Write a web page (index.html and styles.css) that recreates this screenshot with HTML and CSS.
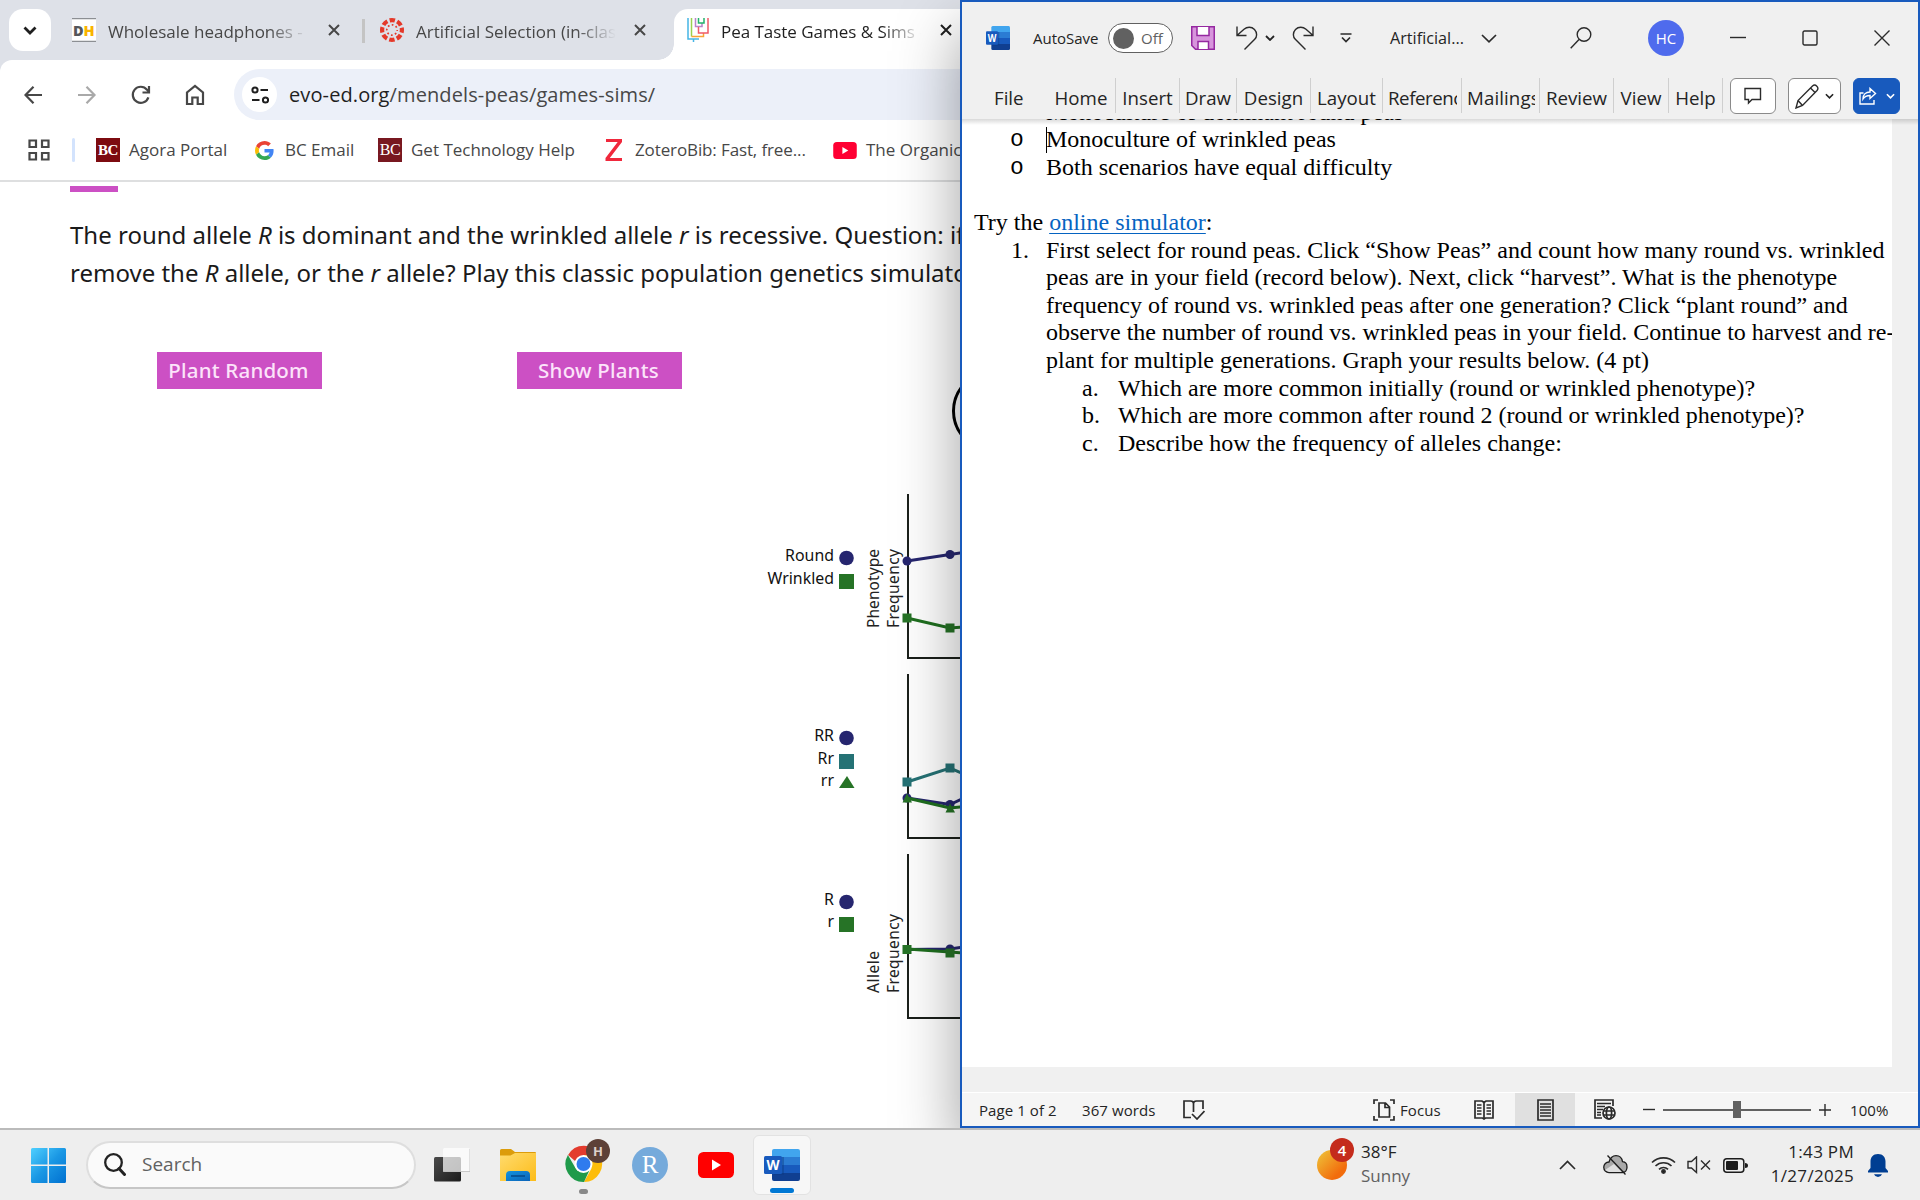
FILE: index.html
```html
<!DOCTYPE html>
<html lang="en">
<head>
<meta charset="utf-8">
<title>Desktop</title>
<link rel="stylesheet" href="styles.css">
</head>
<body>
<svg class="defs" width="0" height="0">
  <defs>
    <linearGradient id="win" x1="0" y1="0" x2="1" y2="1"><stop offset="0" stop-color="#4fd0ff"/><stop offset=".5" stop-color="#1a97e4"/><stop offset="1" stop-color="#0070d0"/></linearGradient>
    <linearGradient id="folder" x1="0" y1="0" x2="1" y2="1"><stop offset="0" stop-color="#ffdb6e"/><stop offset="1" stop-color="#fcbc19"/></linearGradient>
    <linearGradient id="sun" x1="0" y1="0" x2="1" y2="1"><stop offset=".1" stop-color="#efbb35"/><stop offset=".75" stop-color="#f26c0c"/></linearGradient>
    <linearGradient id="tv" x1="0" y1="0" x2="1" y2="1"><stop offset="0" stop-color="#4a4a4a"/><stop offset="1" stop-color="#1c1c1c"/></linearGradient>
    <linearGradient id="tray" x1="0" y1="0" x2="1" y2="1"><stop offset="0" stop-color="#1493df"/><stop offset="1" stop-color="#0a63b8"/></linearGradient>
    <symbol id="word" viewBox="0 0 36 32">
      <path d="M10 0h24a2 2 0 0 1 2 2v6H8V2a2 2 0 0 1 2-2z" fill="#41a5ee"/><path d="M8 8h28v8H8z" fill="#2b7cd3"/><path d="M8 16h28v8H8z" fill="#185abd"/><path d="M8 24h28v6a2 2 0 0 1-2 2H10a2 2 0 0 1-2-2z" fill="#103f91"/>
      <rect x="10" y="8" width="10" height="18" fill="#0d3a80" opacity=".4"/>
      <rect x="0" y="7" width="18" height="18" rx="1.500" fill="#185abd"/>
      <text x="9" y="21" text-anchor="middle" class="word-w">W</text>
    </symbol>
    <symbol id="close" viewBox="0 0 12 12"><path d="M1 1l10 10M11 1L1 11" fill="none" stroke="currentColor" stroke-width="2"/></symbol>
    <symbol id="caret" viewBox="0 0 10 6"><path d="M1 1l4 4 4-4" fill="none" stroke="currentColor" stroke-width="1.800"/></symbol>
    <symbol id="youtube" viewBox="0 0 36 26"><rect width="36" height="26" rx="5.500" fill="currentColor"/><path d="M14 7.500l9 5.500-9 5.500z" fill="#fff"/></symbol>
  </defs>
</svg>

<main class="desktop">
  <section class="browser">
    <header class="tab-strip">
      <button class="tab-search"><svg width="14" height="9" viewBox="0 0 14 9"><path d="M1.500 1.500L7 7l5.500-5.500" fill="none" stroke="#1f1f1f" stroke-width="2.800"/></svg></button>
      <div class="tab first">
        <svg width="24" height="24" viewBox="0 0 24 24"><rect width="24" height="24" fill="#fff"/><path d="M0 .500h24M0 23.500h24" stroke="#8c8f93" stroke-width="1.500"/><text x="1" y="17.500" class="dh" fill="#55565a">D</text><text x="11.500" y="17.500" class="dh" fill="#f9b400">H</text></svg>
        <span class="tab-title">Wholesale headphones -</span>
        <svg class="x" width="12" height="12"><use href="#close"/></svg>
      </div>
      <i class="tab-sep"></i>
      <div class="tab">
        <svg width="24" height="24" viewBox="0 0 24 24" fill="none" stroke="#e4392a"><circle cx="12" cy="12" r="9.900" stroke-width="4.200" stroke-dasharray="5.400 2.375" stroke-dashoffset="2.700"/><circle cx="12" cy="12" r="5.200" stroke-width="1.700" stroke-dasharray="1.700 2.384" stroke-dashoffset=".85"/></svg>
        <span class="tab-title">Artificial Selection (in-class</span>
        <svg class="x" width="12" height="12"><use href="#close"/></svg>
      </div>
      <div class="tab active">
        <svg width="24" height="24" viewBox="0 0 24 24" fill="none" stroke-width="1.500"><path d="M2 0v21h11M7.500 21v3" stroke="#45b5e5"/><path d="M5.500 0v18.500" stroke="#9ad14f"/><path d="M5.500 18.500h12V15" stroke="#f7a436"/><path d="M9.500 0v8.500h6.500V5" stroke="#b983c9"/><path d="M12.500 0v5h5.500V0" stroke="#23b26b"/><path d="M12.500 9v6H22V0" stroke="#ef5a67"/></svg>
        <span class="tab-title">Pea Taste Games &amp; Sims -</span>
        <svg class="x" width="12" height="12"><use href="#close"/></svg>
      </div>
    </header>
    <div class="chrome-body">
      <nav class="toolbar">
        <svg width="20" height="20" viewBox="0 0 20 20" class="line"><path d="M18 10H2M9.500 1.800L1.500 10l8 8.200"/></svg>
        <svg width="20" height="20" viewBox="0 0 20 20" class="line dim"><path d="M1 10h16M9.500 1.800l8 8.200-8 8.200"/></svg>
        <svg width="20" height="20" viewBox="0 0 20 20" class="line"><path d="M17.400 12.300A8 8 0 1 1 16 4.700l1.500 2"/><path d="M18 1v6.500h-6.500"/></svg>
        <svg width="20" height="22" viewBox="0 0 20 22" class="line"><path d="M2 20V8.500L10 2l8 6.500V20h-5.300v-6.500H7.300V20z"/></svg>
        <div class="omnibox">
          <span class="site-info"><svg width="18" height="18" viewBox="0 0 18 18" fill="none" stroke="#1f1f1f" stroke-width="2"><circle cx="4" cy="4" r="2.600"/><path d="M9.500 4H17M1 14h7.500"/><circle cx="14.500" cy="14" r="2.600"/></svg></span>
          <span class="url"><b>evo-ed.org</b>/mendels-peas/games-sims/</span>
        </div>
      </nav>
      <nav class="bookmarks">
        <svg width="22" height="22" viewBox="0 0 22 22" fill="none" stroke="#474747" stroke-width="2.200"><path d="M1.500 1.500h6.500v6.500H1.500zM14 1.500h6.500v6.500H14zM1.500 14h6.500v6.500H1.500zM14 14h6.500v6.500H14z"/></svg>
        <i class="bm-sep"></i>
        <b class="bc">BC</b><span>Agora Portal</span>
        <svg width="19" height="19" viewBox="0 0 48 48"><path fill="#EA4335" d="M24 9.500c3.540 0 6.710 1.220 9.210 3.600l6.850-6.850C35.900 2.380 30.470 0 24 0 14.620 0 6.510 5.380 2.560 13.220l7.980 6.190C12.430 13.720 17.740 9.500 24 9.500z"/><path fill="#4285F4" d="M46.980 24.550c0-1.570-.15-3.090-.38-4.550H24v9.020h12.940c-.58 2.960-2.260 5.480-4.780 7.180l7.730 6c4.510-4.180 7.090-10.360 7.090-17.650z"/><path fill="#FBBC05" d="M10.530 28.590A14.500 14.500 0 0 1 9.770 24c0-1.600.27-3.140.76-4.590l-7.980-6.190A23.900 23.900 0 0 0 0 24c0 3.880.92 7.540 2.560 10.780z"/><path fill="#34A853" d="M24 48c6.480 0 11.930-2.130 15.890-5.810l-7.730-6c-2.150 1.450-4.920 2.300-8.160 2.300-6.260 0-11.570-4.220-13.470-9.910l-7.980 6.190C6.510 42.620 14.620 48 24 48z"/></svg>
        <span>BC Email</span>
        <b class="bc alt">BC</b><span>Get Technology Help</span>
        <svg width="18" height="22" viewBox="0 0 18 22"><path d="M1 0h16v3L4.800 19H17v3H.500v-3L12.700 3H1z" fill="#f0283c"/></svg>
        <span class="tight">ZoteroBib: Fast, free...</span>
        <svg width="24" height="17" class="yt-pink"><use href="#youtube"/></svg>
        <span>The Organic</span>
      </nav>
      <article class="page">
        <i class="accent"></i>
        <p>The round allele <em>R</em> is dominant and the wrinkled allele <em>r</em> is recessive. Question: if<br>remove the <em>R</em> allele, or the <em>r</em> allele? Play this classic population genetics simulator</p>
        <div class="game">
          <div class="game-buttons"><button>Plant Random</button><button>Show Plants</button></div>
          <svg class="plots" width="220" height="700" viewBox="740 340 220 700">
            <circle cx="992.500" cy="411" r="39" fill="none" stroke="#000" stroke-width="3"/>
            <g class="axes"><path d="M908 494v164h60M908 674v164h60M908 854v164h60"/></g>
            <g class="legend">
              <text x="834" y="561">Round</text><text x="834" y="584">Wrinkled</text>
              <text x="834" y="741">RR</text><text x="834" y="764">Rr</text><text x="834" y="786">rr</text>
              <text x="834" y="905">R</text><text x="834" y="927">r</text>
            </g>
            <g class="titles">
              <text transform="translate(879 628) rotate(-90)" textLength="79">Phenotype</text>
              <text transform="translate(898.500 628) rotate(-90)" textLength="79">Frequency</text>
              <text transform="translate(879 993) rotate(-90)" textLength="42">Allele</text>
              <text transform="translate(898.500 993) rotate(-90)" textLength="79">Frequency</text>
            </g>
            <g class="navy"><circle cx="846.500" cy="558" r="7.300"/><circle cx="846.500" cy="738" r="7.300"/><circle cx="846.500" cy="902" r="7.300"/>
              <path d="M907 561l43-6.500 14-2M907 798l43 6.500 14-6.500M907 949.500l43-.5 14-2"/>
              <circle cx="907" cy="561" r="4.500"/><circle cx="950" cy="554.500" r="4.500"/><circle cx="907" cy="798" r="4.500"/><circle cx="950" cy="804.500" r="4.500"/><circle cx="950" cy="949" r="4.500"/></g>
            <g class="teal"><path d="M907 782l43-14 14 6"/><rect x="839" y="754" width="15" height="15"/><rect x="902.500" y="777.500" width="9" height="9"/><rect x="945.500" y="763.500" width="9" height="9"/></g>
            <g class="green"><path d="M907 618l43 10 14-1M907 798l43 10 14-1.500M907 949l43 3 14 1"/>
              <rect x="839" y="574" width="15" height="15"/><rect x="839" y="917" width="15" height="15"/><polygon points="847,776 854.500,788 839,788"/>
              <rect x="902.500" y="613.500" width="9" height="9"/><rect x="945.500" y="623.500" width="9" height="9"/><polygon points="907,793.500 912,802.500 902.500,802.500"/><polygon points="950,803.500 955,812.500 945.500,812.500"/><rect x="902.500" y="945" width="9" height="9"/><rect x="945.500" y="948.500" width="9" height="9"/></g>
          </svg>
        </div>
      </article>
    </div>
  </section>

  <section class="word">
    <header class="title-bar">
      <svg width="24" height="24" viewBox="0 0 36 32" preserveAspectRatio="none"><use href="#word"/></svg>
      <span>AutoSave</span>
      <span class="toggle"><i></i>Off</span>
      <svg width="24" height="24" viewBox="0 0 24 24" fill="#d795dc" stroke="#9528a0" stroke-width="1.500"><path d="M.750.750h22.500v22.500H4.500L.750 19.500z"/><path d="M6 1v8.500h12V1M7 23v-7.500h10.500V23" fill="#fff"/></svg>
      <svg width="22" height="24" viewBox="0 0 22 24" class="thin"><path d="M1 .500V9.500h9.500M1.500 9L8 3.200C11 .7 15.500.4 18.500 3.500c3 3.200 2.600 7.300.2 9.800L8.500 23.500"/></svg>
      <svg width="10" height="6" class="dark"><use href="#caret"/></svg>
      <svg width="22" height="24" viewBox="0 0 22 24" class="thin"><path d="M21 .500V9.500h-9.500M20.500 9L14 3.200C11 .7 6.500.4 3.500 3.500.5 6.700.9 10.800 3.300 13.300L13.500 23.500"/></svg>
      <svg width="12" height="10" viewBox="0 0 12 10" class="thin bold"><path d="M.500 1h11M2 4.500l4 4 4-4"/></svg>
      <span class="doc-name">Artificial...</span>
      <svg width="16" height="9" viewBox="0 0 16 9" class="thin bold"><path d="M1 1l7 6.800L15 1"/></svg>
      <svg width="22" height="22" viewBox="0 0 22 22" class="thin"><circle cx="14" cy="7.500" r="6.800"/><path d="M9 12.500L.700 21.300"/></svg>
      <span class="avatar">HC</span>
      <svg width="16" height="16" viewBox="0 0 16 16" class="thin"><path d="M0 7.500h16"/></svg>
      <svg width="16" height="16" viewBox="0 0 16 16" class="thin"><rect x="1" y="1" width="14" height="14" rx="1.500"/></svg>
      <svg width="16" height="16" viewBox="0 0 16 16" class="thin"><path d="M.500.500l15 15M15.500.500l-15 15"/></svg>
    </header>
    <nav class="ribbon">
      <span>File</span><span>Home</span><span>Insert</span><span>Draw</span><span>Design</span><span>Layout</span><span class="cut"><u>References</u></span><span class="cut"><u>Mailings</u></span><span>Review</span><span>View</span><span>Help</span>
      <div class="actions">
        <button class="comment"><svg width="18" height="18" viewBox="0 0 18 18" class="thin"><path d="M1 1.500h15.500v11H8L4.500 16v-3.500H1z"/></svg></button>
        <button class="pen"><svg width="24" height="25" viewBox="0 0 24 25" class="thin"><path d="M1 24l2-7.500L17.500 2c3-2.500 7 1.500 4.500 4.500L7.500 21.500zM3 16.500l4.500 5M15.500 4l4.800 4.800"/></svg><svg width="9" height="6" class="dark"><use href="#caret"/></svg></button>
        <button class="share"><svg width="18" height="18" viewBox="0 0 18 18" class="thin"><path d="M4.500 6H1v11h14v-4M4 12c0-4.500 3-7 7-7V1.500L16.500 6.500 11 11.500V8.500c-3 0-5.500 1-7 3.500z"/></svg><svg width="9" height="6"><use href="#caret"/></svg></button>
      </div>
    </nav>
    <div class="canvas">
      <div class="document">
        <ul class="options"><li>Monoculture of dominant round peas</li><li class="caret">Monoculture of wrinkled peas</li><li>Both scenarios have equal difficulty</li></ul>
        <p>Try the <a>online simulator</a>:</p>
        <div class="step"><span>1.</span><div>First select for round peas. Click “Show Peas” and count how many round vs. wrinkled<br>peas are in your field (record below). Next, click “harvest”. What is the phenotype<br>frequency of round vs. wrinkled peas after one generation? Click “plant round” and<br>observe the number of round vs. wrinkled peas in your field. Continue to harvest and re-<br>plant for multiple generations. Graph your results below. (4 pt)</div></div>
        <div class="step sub"><span>a.</span><div>Which are more common initially (round or wrinkled phenotype)?</div></div>
        <div class="step sub"><span>b.</span><div>Which are more common after round 2 (round or wrinkled phenotype)?</div></div>
        <div class="step sub"><span>c.</span><div>Describe how the frequency of alleles change:</div></div>
      </div>
    </div>
    <footer class="status">
      <span>Page 1 of 2</span><span>367 words</span>
      <svg width="22" height="20" viewBox="0 0 22 20" class="thin bold"><path d="M8 17.500H1V1h6.500q3 0 3 2.500 0-2.500 3-2.500H20v8M10.500 3.500V12M9 14l5 5 7.500-8"/></svg>
      <svg width="22" height="22" viewBox="0 0 22 22" class="thin bold"><path d="M1 5V1h4M17 1h4v4M21 17v4h-4M5 21H1v-4M6 4h6.500L16.500 8v10H6zM12 4v4.500h4.500"/></svg>
      <span>Focus</span>
      <svg width="20" height="20" viewBox="0 0 20 20" class="thin bold"><path d="M1 1h7l2 1.500L12 1h7v17h-7.500L10 19l-1.500-1H1zM10 2.500V19M3 5h4.500M3 8h4.500M3 11h4.500M3 14h4.500M12.500 5H17M12.500 8H17M12.500 11H17M12.500 14H17"/></svg>
      <div class="view-on"><svg width="17" height="22" viewBox="0 0 17 22" class="thin bold"><path d="M1 1h15v20H1zM3 5h11M3 8h11M3 11h11M3 14h11M3 17h11"/></svg></div>
      <svg width="22" height="21" viewBox="0 0 22 21" class="thin bold"><path d="M8 19H1V1h18v6M3 4.500h14M3 7.500h8M3 10.500h6M3 13.500h4M3 16h4"/><circle cx="15" cy="14" r="6"/><ellipse cx="15" cy="14" rx="2.600" ry="6"/><path d="M9 12h12M9 16h12"/></svg>
      <svg width="12" height="12" viewBox="0 0 12 12" class="thin"><path d="M0 5.500h12"/></svg>
      <div class="zoom"><i></i></div>
      <svg width="12" height="12" viewBox="0 0 12 12" class="thin"><path d="M0 6h12M6 0v12"/></svg>
      <span>100%</span>
    </footer>
  </section>
</main>

<footer class="taskbar">
  <svg width="35" height="35" viewBox="0 0 35 35"><path fill="url(#win)" d="M1.500 0H16.500V16.500H0V1.500A1.500 1.500 0 0 1 1.500 0zM18 0h15.500A1.500 1.500 0 0 1 35 1.500v15H18zM0 18h16.500v17H1.500A1.500 1.500 0 0 1 0 33.500zM18 18h17v15.500a1.500 1.500 0 0 1-1.500 1.500H18z"/></svg>
  <div class="search"><svg width="22" height="23" viewBox="0 0 22 23" fill="none" stroke="#222" stroke-width="2.300"><circle cx="9.500" cy="9.500" r="8.300"/><path d="M15 15.500l5.500 6" stroke-width="3" stroke-linecap="round"/></svg><span>Search</span></div>
  <svg width="36" height="34" viewBox="0 0 36 34"><rect x="0" y="9" width="27" height="24.500" rx="1.500" fill="url(#tv)"/><rect x="9" y="0" width="27" height="24" rx="1.500" fill="#fff" opacity=".72"/><path d="M9 23.500h27V1" fill="none" stroke="#bbb" stroke-width=".8"/></svg>
  <svg width="36" height="33" viewBox="0 0 36 33"><path d="M0 1.500Q0 0 1.500 0H11l4 3h20q1 0 1 1v8H0z" fill="#dc9c0b"/><path d="M0 6.500h10.500L15 4h21v28H0z" fill="url(#folder)"/><path d="M6 32v-6q0-4 4-4h16q4 0 4 4v6z" fill="url(#tray)"/><path d="M11 27h14" stroke="#064b8c" stroke-width="1.600"/></svg>
  <div class="task"><svg width="46" height="46" viewBox="560 1138 46 46"><path d="M578.500 1164L568.100 1155A18 18 0 0 1 599.600 1155H583.500z" fill="#e33b2e"/><path d="M583.500 1155H599.600A18 18 0 0 1 584 1182l7.500-13.500z" fill="#fdbd0a"/><path d="M567.900 1155l7.800 13.500q5 7 15-1L584 1182A18 18 0 0 1 567.900 1155z" fill="#1f9a4a"/><circle cx="583.500" cy="1164" r="9" fill="#fff"/><circle cx="583.500" cy="1164" r="7" fill="#2f7bee"/></svg><b class="profile">H</b><i class="dot"></i></div>
  <span class="r-app">R</span>
  <svg width="36" height="26" class="yt-red"><use href="#youtube"/></svg>
  <div class="task open"><svg width="36" height="32"><use href="#word"/></svg><i class="bar"></i></div>
  <div class="weather"><svg width="30" height="30" viewBox="0 0 30 30"><circle cx="15" cy="15" r="15" fill="url(#sun)"/></svg><b>4</b></div>
  <div class="stack"><span>38°F</span><span class="muted">Sunny</span></div>
  <svg width="17" height="10" viewBox="0 0 17 10" class="thin bold"><path d="M1 9l7.500-7.500L16 9"/></svg>
  <svg width="25" height="20" viewBox="0 0 25 20"><path d="M6 17.500a5.200 5.200 0 0 1 0-10.500C7.500 2 10 .700 13 .700c4 0 6 3 6.500 6 6 .3 6 10.800 0 10.800z" fill="#a9a9a9" stroke="#1c1c1c" stroke-width="1.300"/><path d="M2 15l9-6 8 8H6z" fill="#dedede"/><path d="M4.500.500l18 19" stroke="#1c1c1c" stroke-width="1.300"/></svg>
  <svg width="25" height="18" viewBox="0 0 25 18" class="thin bold"><path d="M1 6.500a16.500 16.500 0 0 1 23 0M4.500 10a11.500 11.500 0 0 1 16 0M8 13.300a6.500 6.500 0 0 1 9 0"/><circle cx="12.500" cy="15.500" r="1.600" fill="#1c1c1c"/></svg>
  <svg width="24" height="18" viewBox="0 0 24 18" class="thin"><path d="M1 5.500v6.500h3.500l5 4.500V1L4.500 5.500zM14 4.500l9 9M23 4.500l-9 9"/></svg>
  <svg width="25" height="15" viewBox="0 0 25 15"><rect x=".8" y=".8" width="20" height="13.400" rx="3" fill="none" stroke="#1c1c1c" stroke-width="1.500"/><rect x="3" y="3" width="12" height="9" rx="1" fill="#1c1c1c"/><path d="M22 5q3 0 3 2.500T22 10z" fill="#1c1c1c"/></svg>
  <div class="stack right"><span>1:43 PM</span><span>1/27/2025</span></div>
  <svg width="20" height="23" viewBox="0 0 20 23"><path d="M10 0c5 0 7.500 3.500 7.500 7.500V14l2.500 3v1.500H0V17l2.500-3V7.500C2.500 3.500 5 0 10 0zM6 20.300h8Q13 23 10 23t-4-2.700z" fill="#003e92"/></svg>
</footer>
</body>
</html>
```
FILE: styles.css
```css
* { box-sizing: border-box; }
body {
  margin: 0;
  width: 1920px;
  height: 1200px;
  display: flex;
  flex-direction: column;
  overflow: hidden;
  font-family: "Open Sans", "Noto Sans", sans-serif;
  color: #242424;
}
svg { display: block; flex: none; }
button { font: inherit; border: 0; padding: 0; display: flex; align-items: center; justify-content: center; }
.defs { position: absolute; }
.desktop { height: 1128px; display: grid; grid-template-columns: 960px 960px; }
.word-w { font: bold 13.500px "Open Sans", sans-serif; fill: #fff; }
.dh { font: 800 14.500px "Open Sans", sans-serif; }

/* Browser */
.browser { background: #dee1e8; overflow: hidden; height: 1128px; }
.tab-strip {
  height: 60px;
  padding: 9px 0 0 9px;
  display: grid;
  grid-template-columns: 42px 311px 3px 309px 300px;
  font-size: 17px;
  color: #474747;
}
.tab-search { width: 42px; height: 42px; border-radius: 14px; background: #fff; }
.tab { display: flex; align-items: center; height: 42px; padding-left: 21px; }
.tab + .tab-sep + .tab { padding-left: 15px; }
.tab-title {
  margin-left: 12px;
  width: 206px;
  white-space: nowrap;
  overflow: hidden;
  -webkit-mask-image: linear-gradient(90deg, #000 160px, transparent 200px);
  mask-image: linear-gradient(90deg, #000 160px, transparent 200px);
  padding-top: 2px;
}
.tab .x { margin-left: 12px; }
.tab.first .x { margin-left: 14px; }
.tab-sep { width: 3px; height: 24px; margin-top: 10px; background: #c4c4c4; }
.tab.active {
  background: #fff;
  height: 51px;
  padding: 0 0 9px 12px;
  border-top-left-radius: 14px;
  color: #1f1f1f;
  position: relative;
}
.tab.active .tab-title { margin-left: 11px; width: 207px; letter-spacing: -.03px; }
.tab.active::before {
  content: "";
  position: absolute;
  left: -16px;
  bottom: 0;
  width: 16px;
  height: 16px;
  background: radial-gradient(circle at 0 0, transparent 15.500px, #fff 16px);
}
.chrome-body { background: #fff; border-top-left-radius: 12px; height: 1068px; }
.toolbar {
  height: 60px;
  padding-top: 9px;
  display: grid;
  grid-template-columns: 53px 54px 54px 49px 726px;
  align-items: center;
  padding-left: 24px;
}
.line { fill: none; stroke: #474747; stroke-width: 2.200px; }
.line.dim { stroke: #a9a9a9; }
.omnibox { height: 51px; border-radius: 26px 0 0 26px; background: #ecf0f9; display: flex; align-items: center; padding-left: 8px; }
.site-info { width: 35px; height: 35px; border-radius: 50%; background: #fff; display: grid; place-items: center; }
.url { margin-left: 12px; font-size: 20px; letter-spacing: .11px; color: #474747; }
.url b { font-weight: 400; color: #1f1f1f; }
.bookmarks {
  height: 62px;
  border-bottom: 2px solid #dedfe0;
  padding-left: 28px;
  display: grid;
  grid-template-columns: 44px 24px 33px 126px 30px 93px 33px 194px 30px 198px 33px 200px;
  align-items: center;
  font-size: 17px;
  color: #474747;
  white-space: nowrap;
}
.bookmarks span { padding-bottom: 2px; }
.bookmarks .tight { letter-spacing: -.12px; }
.bm-sep { width: 3px; height: 24px; background: #d3e3fd; border-radius: 2px; }
.bc { width: 24px; height: 24px; background: #7d0b10; color: #fff; font: bold 15px/24px "Liberation Serif", serif; text-align: center; letter-spacing: -.5px; }
.bc.alt { background: #781820; font-weight: 400; font-size: 16px; }
.yt-pink { color: #ff0033; }
.yt-red { color: #f00; }
.page { padding: 4px 0 0 70px; font-family: "Noto Sans", sans-serif; }
.accent { display: block; width: 48px; height: 6px; background: #cc50c4; }
.page p { margin: 24px 0 0; font-size: 24px; line-height: 38px; color: #1a1a1a; white-space: nowrap; }
.game { display: flex; padding: 48px 0 0 87px; }
.game-buttons { display: flex; gap: 195px; width: 583px; padding-top: 12px; }
.game-buttons button { flex: none; width: 165px; height: 37px; padding: 0 2px 1px 0; background: #cc50c4; color: #fce4fa; font-size: 20.500px; font-weight: 500; letter-spacing: .2px; }
.axes { fill: none; stroke: #1a1f1a; stroke-width: 2px; }
.legend { font: 15.900px "Noto Sans", sans-serif; text-anchor: end; fill: #111; }
.titles { font: 15.500px "Noto Sans", sans-serif; fill: #222; }
.navy { fill: #26266f; } .navy path { fill: none; stroke: #26266f; stroke-width: 3px; }
.teal { fill: #257275; } .teal path { fill: none; stroke: #257275; stroke-width: 3px; }
.green { fill: #267326; } .green path { fill: none; stroke: #1f6f1f; stroke-width: 3px; }

/* Word */
.word {
  height: 1128px;
  border: 2px solid #185abd;
  background: #f0f0f0;
  display: flex;
  flex-direction: column;
  position: relative;
  box-shadow: 0 30px 60px rgba(0, 0, 0, .38);
}
.title-bar {
  height: 72px;
  padding-left: 24px;
  display: grid;
  grid-template-columns: 47px 75px 83px 45px 29px 27px 48px 50px 91px 89px 78px 82px 72px 72px 20px;
  align-items: center;
  font-size: 15px;
  white-space: nowrap;
}
.title-bar .doc-name { font-size: 16.200px; }
.thin { fill: none; stroke: #2b2b2b; stroke-width: 1.400px; }
.thin.bold { stroke-width: 1.700px; }
.dark { color: #242424; }
.title-bar .toggle { width: 65px; height: 30px; border: 1.500px solid #616161; border-radius: 15px; background: #fff; display: flex; align-items: center; gap: 7px; padding: 0 0 0 4px; color: #616161; }
.toggle i { width: 21px; height: 21px; border-radius: 50%; background: #616161; }
.title-bar .avatar { width: 36px; height: 36px; border-radius: 50%; background: #4f6bed; color: #fff; font-size: 15px; text-align: center; line-height: 37px; }
.ribbon {
  height: 45px;
  display: grid;
  grid-template-columns: 85px 69px 64px 57px 74px 72px 79px 78px 74px 55px 54px 195px;
  font-size: 18.700px;
  padding-top: 4px;
}
.ribbon > span { height: 35px; line-height: 39px; border-right: 1px solid #cfcfcf; text-align: center; white-space: nowrap; }
.ribbon > span:first-child { border: 0; text-align: left; padding-left: 32px; }
.ribbon > .cut { text-align: left; padding: 0 4px 0 5px; letter-spacing: -.45px; }
.ribbon .cut + .cut { letter-spacing: .1px; }
.ribbon u { display: block; overflow: hidden; text-decoration: none; }
.actions { display: flex; padding-left: 7px; gap: 12px; color: #fff; }
.actions button { height: 36px; border: 1px solid #8a8a8a; border-radius: 6px; background: #fff; gap: 6px; color: #fff; }
.actions .comment { width: 46px; }
.actions .pen { width: 53px; }
.actions .share { width: 47px; background: #185abd; border-color: #185abd; gap: 9px; }
.share .thin { stroke: #fff; }
.canvas { height: 974px; position: relative; border-bottom: 1px solid #fff; overflow: hidden; }
.canvas::before { content: ""; position: absolute; inset: 0 0 auto; height: 6px; background: linear-gradient(rgba(0, 0, 0, .15), rgba(0, 0, 0, 0)); }
.document {
  width: 930px;
  height: 948px;
  background: #fff;
  padding-left: 13px;
  overflow: hidden;
  font: 24px/27.600px "Liberation Serif", serif;
  color: #000;
  white-space: nowrap;
}
.options { list-style: none; margin: -20.400px 0 27.600px; padding: 0 0 0 71px; }
.options li { position: relative; }
.options li::before { content: "o"; position: absolute; left: -36px; top: 1px; font: 23px/27.600px "Liberation Mono", monospace; }
.options .caret::after { content: ""; position: absolute; left: 0; top: 1px; width: 1px; height: 26px; background: #000; }
.document p { margin: 0 0 0 -1px; }
.document a { color: #0563c1; text-decoration: underline; text-decoration-thickness: 1px; text-underline-offset: 3px; }
.step { display: grid; grid-template-columns: 35px auto; padding-left: 36px; }
.step.sub { grid-template-columns: 36px auto; padding-left: 107px; }
.status {
  height: 33px;
  background: #f5f5f5;
  display: grid;
  grid-template-columns: 103px 101px 190px 27px 74px 41px 79px 49px 20px 156px 31px 50px;
  align-items: center;
  font-size: 15px;
  padding-left: 17px;
  white-space: nowrap;
}
.status > span { padding-top: 1px; letter-spacing: .08px; }
.view-on { width: 60px; height: 33px; background: #e0e0e0; display: grid; place-items: center; }
.zoom { width: 148px; height: 2px; background: #616161; display: flex; align-items: center; justify-content: center; }
.zoom i { width: 8px; height: 17px; background: #616161; }

/* Taskbar */
.taskbar {
  height: 72px;
  position: relative;
  background: #eee;
  border-top: 2px solid #bbb;
  padding-left: 31px;
  display: grid;
  grid-template-columns: 55px 348px 66px 60px 72px 66px 55px 564px 44px 198px 44px 48px 36px 36px 45px 100px 34px;
  align-items: center;
}
.search { width: 330px; height: 48px; margin-top: -1px; border: 2px solid #dedede; border-bottom-color: #c6c6c6; border-radius: 24px; background: #fafafa; display: flex; align-items: center; gap: 16px; padding-left: 16px; font-size: 19px; color: #616161; }
.search span { padding-bottom: 2px; }
.task { position: relative; height: 60px; display: grid; place-items: center; width: 46px; }
.task svg { transform: translateY(-4px); }
.profile { position: absolute; right: -4px; top: 4px; width: 24px; height: 24px; border-radius: 50%; background: #5d4037; color: #ddd0ca; font-size: 13px; line-height: 24px; text-align: center; }
.dot, .bar { position: absolute; left: calc(50% - 4px); bottom: 1px; width: 9px; height: 5px; border-radius: 3px; background: #888; }
.bar { width: 24px; left: 16px; background: #0078d4; }
.r-app { width: 36px; height: 36px; border-radius: 50%; background: #75aadb; color: #fff; font: 25px/35px "Liberation Serif", serif; text-align: center; }
.task.open { width: 58px; background: #f7f7f7; border: 1px solid #e2e2e2; border-radius: 6px; }
.task.open svg { transform: none; }
.weather { position: relative; width: 30px; margin-left: 0; }
.weather b { position: absolute; left: 13px; top: -12px; width: 24px; height: 24px; border-radius: 50%; background: #c42b1c; color: #fff; font-weight: 600; font-size: 15px; line-height: 24px; text-align: center; }
.stack { display: flex; flex-direction: column; font-size: 17px; line-height: 24px; padding-bottom: 3px; white-space: nowrap; }
.stack.right { align-items: flex-end; width: 86px; letter-spacing: .3px; }
.muted { color: #616161; }
```
